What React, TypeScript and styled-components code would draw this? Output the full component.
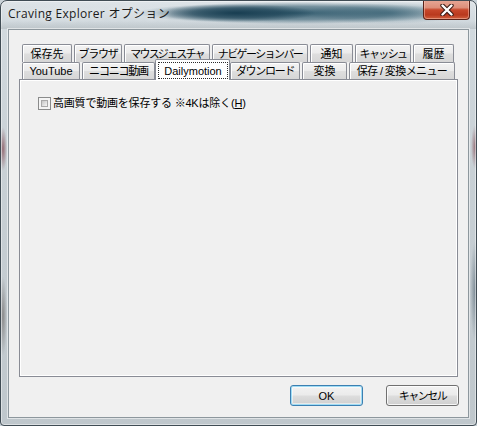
import React from "react";
import styled, { createGlobalStyle } from "styled-components";

const GlobalStyle = createGlobalStyle`
  html, body {
    margin: 0;
    padding: 0;
    width: 477px;
    height: 426px;
    overflow: hidden;
    background: #c9d2d8;
  }
  * { box-sizing: border-box; }
`;

const UI_FONT = `"Liberation Sans", "Noto Sans CJK JP", sans-serif`;

const Window = styled.div`
  width: 477px;
  height: 426px;
  border: 1px solid #404c54;
  border-radius: 7px 7px 4px 4px;
  padding: 0 7px 7px 7px;
  display: flex;
  flex-direction: column;
  overflow: hidden;
  background:
    radial-gradient(4px 22px at 2px 148px, rgba(105, 28, 38, 0.55), rgba(105, 28, 38, 0)),
    radial-gradient(4px 40px at 2px 315px, rgba(70, 60, 55, 0.45), rgba(70, 60, 55, 0)),
    radial-gradient(4px 22px at 474px 146px, rgba(105, 28, 38, 0.5), rgba(105, 28, 38, 0)),
    radial-gradient(5px 50px at 474px 290px, rgba(60, 80, 95, 0.5), rgba(60, 80, 95, 0)),
    linear-gradient(to bottom, #d3dbe0 0%, #c8d0d5 40%, #bfc7cc 100%);
  box-shadow: inset 0 0 0 1px rgba(255, 255, 255, 0.45);
`;

const TitleBar = styled.div`
  height: 28px;
  margin: 0 -7px;
  padding: 0 6px 0 7px;
  display: flex;
  align-items: flex-start;
  justify-content: space-between;
  background:
    radial-gradient(80px 9px at 235px 12px, rgba(20, 58, 78, 0.95) 0%, rgba(20, 58, 78, 0.6) 55%, rgba(20, 58, 78, 0) 100%),
    radial-gradient(160px 11px at 295px 12px, rgba(38, 82, 102, 0.9) 0%, rgba(38, 82, 102, 0.55) 60%, rgba(38, 82, 102, 0) 100%),
    radial-gradient(80px 11px at 385px 12px, rgba(85, 122, 138, 0.75) 0%, rgba(85, 122, 138, 0) 100%),
    linear-gradient(to bottom, rgba(255,255,255,0.25), rgba(255,255,255,0) 70%, rgba(170,178,182,0.5));
`;

const TitleText = styled.div`
  padding-top: 5px;
  font-family: "Open Sans", "Noto Sans CJK JP", sans-serif;
  font-size: 12px;
  line-height: 16px;
  letter-spacing: 0.3px;
  color: #1b1b1b;
  text-shadow: 0 0 6px rgba(255, 255, 255, 0.9);
`;

const CloseButton = styled.div`
  width: 47px;
  height: 20px;
  margin-top: -1px;
  display: flex;
  align-items: center;
  justify-content: center;
  border: 1px solid #5b2218;
  border-top: none;
  border-radius: 0 0 4px 4px;
  background: linear-gradient(
    to bottom,
    #e7a897 0%,
    #dd8f7a 40%,
    #c7472b 52%,
    #b9391e 78%,
    #d0603f 100%
  );
  box-shadow: inset 0 0 0 1px rgba(255, 210, 195, 0.45);
`;

const Client = styled.div`
  flex: 1;
  display: flex;
  flex-direction: column;
  background: #f0f0f0;
  border: 1px solid #8d979d;
  box-shadow: 0 0 0 1px rgba(255, 255, 255, 0.5);
  padding: 14px 10px 11px 10px;
  font-family: ${UI_FONT};
  color: #000;
`;

const TabStrip = styled.div`
  display: flex;
  flex-direction: column;
`;

const TabRow = styled.div<{ $h: number }>`
  display: flex;
  gap: 2px;
  padding-left: 3px;
  height: ${(p) => p.$h}px;
  align-items: flex-start;
`;

const Tab = styled.div<{ $w: number; $h: number; $sp: number }>`
  position: relative;
  z-index: 1;
  width: ${(p) => p.$w}px;
  height: ${(p) => p.$h}px;
  display: flex;
  align-items: center;
  justify-content: center;
  border: 1px solid #898c95;
  border-bottom: none;
  border-radius: 2px 2px 0 0;
  background: linear-gradient(
    to bottom,
    #f3f3f3 0%,
    #ebebeb 48%,
    #dedede 52%,
    #d6d6d6 100%
  );
  box-shadow: inset 1px 1px 0 #ffffff;
  font-size: 11px;
  line-height: 14px;
  letter-spacing: ${(p) => p.$sp}px;
  white-space: pre;
`;

const ActiveTab = styled.div<{ $w: number }>`
  position: relative;
  z-index: 3;
  width: ${(p) => p.$w}px;
  height: 21px;
  margin: -3px -2px 0 -2px;
  padding: 2px 1px 1px 2px;
  display: flex;
  border: 1px solid #898c95;
  border-bottom: none;
  border-radius: 2px 2px 0 0;
  background: #ffffff;
  font-size: 11px;
  line-height: 14px;
  white-space: nowrap;
`;

const FocusRect = styled.div`
  flex: 1;
  display: flex;
  align-items: center;
  justify-content: center;
  border: 1px dotted #2a2a2a;
`;

const Panel = styled.div`
  position: relative;
  z-index: 2;
  flex: 1;
  width: 439px;
  border: 1px solid #898c95;
  box-shadow: inset -1px -1px 0 #ffffff, inset 1px 1px 0 #ffffff;
  background: #f0f0f0;
  padding: 17px 0 0 18px;
`;

const CheckRow = styled.label`
  display: flex;
  align-items: center;
  gap: 2px;
  font-size: 11px;
  line-height: 13px;
  letter-spacing: -0.2px;
`;

const CheckBox = styled.span`
  width: 13px;
  height: 13px;
  border: 1px solid #8a8b8b;
  background: #f4f4f4;
  padding: 2px;
  display: flex;
  &::after {
    content: "";
    flex: 1;
    background: linear-gradient(135deg, #c6c6c6 0%, #dedede 50%, #f6f6f6 100%);
    border: 1px solid #a9a9a9;
  }
`;

const Underline = styled.span`
  text-decoration: underline;
`;

const ButtonRow = styled.div`
  display: flex;
  justify-content: flex-end;
  gap: 23px;
  margin-top: 8px;
  margin-right: -1px;
`;

const Button = styled.div<{ $default?: boolean; $sp?: number }>`
  width: 73px;
  height: 21px;
  display: flex;
  align-items: center;
  justify-content: center;
  border-radius: 3px;
  border: 1px solid ${(p) => (p.$default ? "#3c7fb1" : "#707070")};
  background: linear-gradient(
    to bottom,
    #f2f2f2 0%,
    #ebebeb 48%,
    #dddddd 52%,
    #cfcfcf 100%
  );
  box-shadow: ${(p) =>
    p.$default
      ? "inset 0 0 0 1px #9fdcf5, inset 0 0 0 2px rgba(255,255,255,0.5)"
      : "inset 0 0 0 1px rgba(255,255,255,0.8)"};
  font-size: 11px;
  line-height: 14px;
  letter-spacing: ${(p) => p.$sp ?? 0}px;
  color: #000;
`;

const row1 = [
  { label: "保存先", w: 50, sp: 0 },
  { label: "ブラウザ", w: 48, sp: -1.3 },
  { label: "マウスジェスチャ", w: 86, sp: -1.8 },
  { label: "ナビゲーションバー", w: 96, sp: -1.6 },
  { label: "通知", w: 43, sp: 0 },
  { label: "キャッシュ", w: 56, sp: -1.6 },
  { label: "履歴", w: 41, sp: 0 },
];

const row2 = [
  { label: "YouTube", w: 58, sp: 0 },
  { label: "ニコニコ動画", w: 73, sp: -1.2 },
  { label: "Dailymotion", w: 75, sp: 0, active: true },
  { label: "ダウンロード", w: 70, sp: -1.3 },
  { label: "変換", w: 45, sp: 0 },
  { label: "保存 / 変換メニュー", w: 106, sp: -0.6 },
];

const CloseGlyph = () => (
  <svg width="14" height="12" viewBox="0 0 14 12">
    <path d="M2.5 1.5 L11.5 10.5 M11.5 1.5 L2.5 10.5" stroke="#3a1a14" strokeWidth="4.4" strokeLinecap="round" />
    <path d="M2.5 1.5 L11.5 10.5 M11.5 1.5 L2.5 10.5" stroke="#ffffff" strokeWidth="2.4" strokeLinecap="round" />
  </svg>
);

export default function App() {
  return (
    <>
      <GlobalStyle />
      <Window>
        <TitleBar>
          <TitleText>Craving Explorer オプション</TitleText>
          <CloseButton>
            <CloseGlyph />
          </CloseButton>
        </TitleBar>
        <Client>
          <TabStrip>
            <TabRow $h={18}>
              {row1.map((t) => (
                <Tab key={t.label} $w={t.w} $h={18} $sp={t.sp}>
                  {t.label}
                </Tab>
              ))}
            </TabRow>
            <TabRow $h={17}>
              {row2.map((t) =>
                t.active ? (
                  <ActiveTab key={t.label} $w={t.w}>
                    <FocusRect>{t.label}</FocusRect>
                  </ActiveTab>
                ) : (
                  <Tab key={t.label} $w={t.w} $h={17} $sp={t.sp}>
                    {t.label}
                  </Tab>
                )
              )}
            </TabRow>
          </TabStrip>
          <Panel>
            <CheckRow>
              <CheckBox />
              <span>
                高画質で動画を保存する ※4Kは除く(<Underline>H</Underline>)
              </span>
            </CheckRow>
          </Panel>
          <ButtonRow>
            <Button $default>OK</Button>
            <Button $sp={-1.5}>キャンセル</Button>
          </ButtonRow>
        </Client>
      </Window>
    </>
  );
}
